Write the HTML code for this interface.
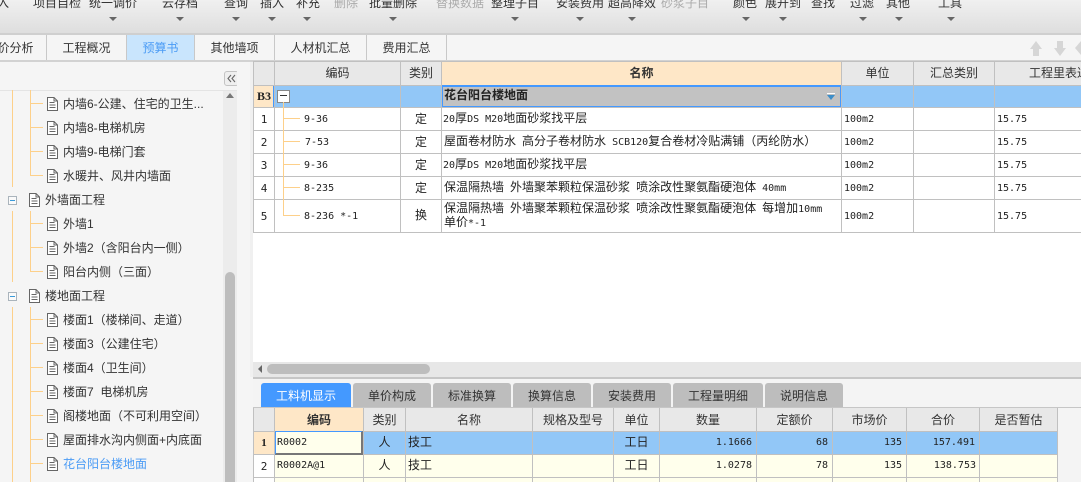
<!DOCTYPE html>
<html lang="zh">
<head>
<meta charset="utf-8">
<style>
html,body{margin:0;padding:0}
body{width:1081px;height:482px;overflow:hidden;position:relative;background:#fff;font-family:"WenQuanYi Zen Hei","Noto Sans CJK SC",sans-serif;font-size:12px;color:#222}
.a,.t,.b,.g,.h,.c,.n,.tree{position:absolute;white-space:nowrap}
.t{top:-4px;line-height:14px;font-family:"Liberation Sans","Noto Sans CJK SC",sans-serif;color:#333;font-size:12px}
.t.d{color:#aaa}
.ar{position:absolute;top:17px;width:0;height:0;border-left:4px solid transparent;border-right:4px solid transparent;border-top:4px solid #666}
.b{top:35px;height:25px;line-height:26px;text-align:center;font-family:"Liberation Sans","Noto Sans CJK SC",sans-serif;color:#333;border-right:1px solid #c8c8c8;box-sizing:border-box}
.tree{font-family:"Liberation Sans","Noto Sans CJK SC",sans-serif;line-height:16px;color:#333;font-size:12px}
.g{background:#c0c0c0}
.h{text-align:center;line-height:23px;height:23px;color:#333}
.c{line-height:23px;height:23px;color:#222}
.m{font-family:"DejaVu Sans Mono",monospace;font-size:10px}
.n{font-family:"DejaVu Sans Mono",monospace;font-size:10px;line-height:23px;height:23px;margin-top:1px;text-align:right;color:#222}
.bt{position:absolute;top:383px;height:24px;line-height:25px;text-align:center;background:#bdbdbd;color:#333;border-radius:3px 3px 0 0;font-size:12px}
</style>
</head>
<body>
<!-- toolbar -->
<div class="a" style="left:0;top:0;width:1081px;height:33px;background:linear-gradient(#f0f0f0,#dedede)"></div>
<div class="a" style="left:0;top:33px;width:1081px;height:2px;background:#cfcfcf"></div>
<span class="t" style="left:-3px">入</span>
<span class="t" style="left:33px">项目自检</span><span class="t" style="left:89px">统一调价</span>
<span class="t" style="left:162px">云存档</span><span class="t" style="left:224px">查询</span>
<span class="t" style="left:260px">插入</span><span class="t" style="left:296px">补充</span>
<span class="t d" style="left:334px">删除</span><span class="t" style="left:369px">批量删除</span>
<span class="t d" style="left:436px">替换数据</span><span class="t" style="left:491px">整理子目</span>
<span class="t" style="left:556px">安装费用</span><span class="t" style="left:608px">超高降效</span>
<span class="t d" style="left:661px">砂浆子目</span><span class="t" style="left:733px">颜色</span>
<span class="t" style="left:765px">展开到</span><span class="t" style="left:811px">查找</span>
<span class="t" style="left:850px">过滤</span><span class="t" style="left:886px">其他</span>
<span class="t" style="left:938px">工具</span>
<i class="ar" style="left:109px"></i><i class="ar" style="left:176px"></i><i class="ar" style="left:232px"></i><i class="ar" style="left:268px"></i><i class="ar" style="left:303px"></i><i class="ar" style="left:389px"></i><i class="ar" style="left:511px"></i><i class="ar" style="left:576px"></i><i class="ar" style="left:628px"></i><i class="ar" style="left:742px"></i><i class="ar" style="left:779px"></i><i class="ar" style="left:859px"></i><i class="ar" style="left:895px"></i><i class="ar" style="left:947px"></i>

<!-- tab bar -->
<div class="a" style="left:0;top:35px;width:1081px;height:25px;background:#f5f5f5"></div>
<div class="a" style="left:0;top:60px;width:1081px;height:2px;background:#d2d2d2"></div>
<div class="b" style="left:-15px;width:62px">价分析</div>
<div class="b" style="left:47px;width:80px">工程概况</div>
<div class="b" style="left:127px;width:68px;background:#c9e5fd;color:#4a9bf5">预算书</div>
<div class="b" style="left:195px;width:80px">其他墙项</div>
<div class="b" style="left:275px;width:92px">人材机汇总</div>
<div class="b" style="left:367px;width:80px">费用汇总</div>
<svg class="a" style="left:1025px;top:38px" width="56" height="20" viewBox="0 0 56 20"><path d="M11 3l6 8h-3v7H8v-7H5zM32 3h6v7h3l-6 8-6-8h3zM56 3v14l-6-7z" fill="#d6d6d6"/></svg>

<!-- left panel -->
<div class="a" style="left:0;top:62px;width:253px;height:420px;background:#f5f5f5"></div>
<div class="a" style="left:0;top:90px;width:249px;height:1px;background:#e4e4e4"></div>
<div class="a" style="left:224px;top:71px;width:13px;height:13px;border:1px solid #c4c4c4;border-radius:3px;background:#efefef"></div>
<svg class="a" style="left:224px;top:71px" width="15" height="15" viewBox="0 0 15 15"><path d="M7 4L4 7.500 7 11M11 4L8 7.500 11 11" fill="none" stroke="#666" stroke-width="1.100"/></svg>
<div class="a" style="left:223px;top:91px;width:14px;height:391px;background:#ececec"></div>
<div class="a" style="left:237px;top:62px;width:13px;height:420px;background:#f5f5f5"></div>
<div class="a" style="left:225px;top:272px;width:10px;height:210px;background:#bdbdbd;border-radius:5px 5px 0 0"></div>
<div class="a" style="left:226px;top:93px;width:0;height:0;border-left:4px solid transparent;border-right:4px solid transparent;border-bottom:5px solid #777"></div>

<svg class="a" style="left:0;top:90px" width="222" height="392" viewBox="0 90 222 392">
<defs><symbol id="doc" viewBox="0 0 11 14"><path d="M.5.500h6.500l3.500 3.500v9.500H.5zM7 .5v3.500h3.500M2.500 5.500h5M2.500 8h6M2.500 10.500h6" fill="#fff" stroke="#666" stroke-width="1"/></symbol></defs>
<path d="M12.500 90v97M12.500 211v71M12.500 307v175M30.500 90v86M30.500 211v61M30.500 307v175" stroke="#fdd08a" stroke-width="1" fill="none"/>
<path d="M31 103.500h12M31 127.500h12M31 151.500h12M31 175.500h12M31 223.500h12M31 247.500h12M31 271.500h12M31 319.500h12M31 343.500h12M31 367.500h12M31 391.500h12M31 415.500h12M31 439.500h12M31 463.500h12" stroke="#fdd08a" stroke-width="1" fill="none"/>
<use href="#doc" x="47" y="97" width="11" height="14"/><use href="#doc" x="47" y="121" width="11" height="14"/><use href="#doc" x="47" y="145" width="11" height="14"/><use href="#doc" x="47" y="169" width="11" height="14"/>
<use href="#doc" x="29" y="193" width="11" height="14"/>
<use href="#doc" x="47" y="217" width="11" height="14"/><use href="#doc" x="47" y="241" width="11" height="14"/><use href="#doc" x="47" y="265" width="11" height="14"/>
<use href="#doc" x="29" y="289" width="11" height="14"/>
<use href="#doc" x="47" y="313" width="11" height="14"/><use href="#doc" x="47" y="337" width="11" height="14"/><use href="#doc" x="47" y="361" width="11" height="14"/><use href="#doc" x="47" y="385" width="11" height="14"/><use href="#doc" x="47" y="409" width="11" height="14"/><use href="#doc" x="47" y="433" width="11" height="14"/><use href="#doc" x="47" y="457" width="11" height="14"/>
<rect x="8.500" y="196.500" width="8" height="8" fill="#fafafa" stroke="#aab4bc"/><path d="M10 200.500h5" stroke="#3a9ad9"/>
<rect x="8.500" y="292.500" width="8" height="8" fill="#fafafa" stroke="#aab4bc"/><path d="M10 296.500h5" stroke="#3a9ad9"/>
</svg>

<div class="tree" style="left:63px;top:96px">内墙6-公建、住宅的卫生...</div>
<div class="tree" style="left:63px;top:120px">内墙8-电梯机房</div>
<div class="tree" style="left:63px;top:144px">内墙9-电梯门套</div>
<div class="tree" style="left:63px;top:168px">水暖井、风井内墙面</div>
<div class="tree" style="left:45px;top:192px">外墙面工程</div>
<div class="tree" style="left:63px;top:216px">外墙1</div>
<div class="tree" style="left:63px;top:240px">外墙2（含阳台内一侧）</div>
<div class="tree" style="left:63px;top:264px">阳台内侧（三面）</div>
<div class="tree" style="left:45px;top:288px">楼地面工程</div>
<div class="tree" style="left:63px;top:312px">楼面1（楼梯间、走道）</div>
<div class="tree" style="left:63px;top:336px">楼面3（公建住宅）</div>
<div class="tree" style="left:63px;top:360px">楼面4（卫生间）</div>
<div class="tree" style="left:63px;top:384px">楼面7&nbsp; 电梯机房</div>
<div class="tree" style="left:63px;top:408px">阁楼地面（不可利用空间）</div>
<div class="tree" style="left:63px;top:432px">屋面排水沟内侧面+内底面</div>
<div class="tree" style="left:63px;top:456px;color:#4a9bf5">花台阳台楼地面</div>

<!-- top grid -->
<div class="a" style="left:250px;top:62px;width:3px;height:315px;background:#f0f0f0"></div>
<div class="a" style="left:253px;top:62px;width:828px;height:23px;background:#e8e8e8"></div>
<div class="a" style="left:442px;top:62px;width:399px;height:23px;background:#fee7c7"></div>
<div class="a" style="left:254px;top:85px;width:827px;height:22px;background:#92c7f7"></div>
<div class="a" style="left:254px;top:85px;width:20px;height:22px;background:#fee7c7"></div>
<div class="a" style="left:273px;top:85px;width:2px;height:22px;background:#4499ff"></div>
<div class="a" style="left:441px;top:85px;width:401px;height:23px;box-sizing:border-box;background:#c2c2c2;border:2px solid #4499ff"></div>
<svg class="a" style="left:826px;top:92px" width="10" height="9" viewBox="0 0 10 9"><path d="M1 1.500h8" stroke="#fff"/><path d="M1 3h8L5 8z" fill="#3d8ec9"/></svg>
<div class="a" style="left:277px;top:90px;width:11px;height:11px;border:1px solid #888;background:#fff"></div>
<div class="a" style="left:280px;top:95px;width:7px;height:1px;background:#333"></div>

<div class="g" style="left:253px;top:61px;width:828px;height:1px"></div>
<div class="g" style="left:253px;top:85px;width:188px;height:1px"></div>
<div class="g" style="left:842px;top:85px;width:239px;height:1px"></div>
<div class="g" style="left:253px;top:107px;width:828px;height:1px"></div>
<div class="g" style="left:253px;top:130px;width:828px;height:1px"></div>
<div class="g" style="left:253px;top:153px;width:828px;height:1px"></div>
<div class="g" style="left:253px;top:176px;width:828px;height:1px"></div>
<div class="g" style="left:253px;top:199px;width:828px;height:1px"></div>
<div class="g" style="left:253px;top:232px;width:828px;height:1px"></div>
<div class="g" style="left:253px;top:61px;width:1px;height:172px"></div>
<div class="g" style="left:274px;top:61px;width:1px;height:172px"></div>
<div class="g" style="left:400px;top:61px;width:1px;height:172px"></div>
<div class="g" style="left:441px;top:61px;width:1px;height:172px"></div>
<div class="g" style="left:841px;top:61px;width:1px;height:172px"></div>
<div class="g" style="left:913px;top:61px;width:1px;height:172px"></div>
<div class="g" style="left:994px;top:61px;width:1px;height:172px"></div>

<div class="h" style="left:275px;top:61px;width:125px">编码</div>
<div class="h" style="left:401px;top:61px;width:40px">类别</div>
<div class="h" style="left:442px;top:61px;width:399px;font-weight:bold">名称</div>
<div class="h" style="left:842px;top:61px;width:71px">单位</div>
<div class="h" style="left:914px;top:61px;width:80px">汇总类别</div>
<div class="h" style="left:1029px;top:61px;width:60px;text-align:left">工程里表达</div>

<div class="c" style="left:254px;top:85px;width:20px;text-align:center;font-family:'Liberation Serif',serif;font-weight:bold">B3</div>
<div class="c" style="left:444px;top:83px;font-weight:bold">花台阳台楼地面</div>

<svg class="a" style="left:283px;top:102px" width="30" height="120" viewBox="283 102 30 120"><path d="M283.500 102v114M284 118.500h16M284 141.500h16M284 164.500h16M284 187.500h16M284 215.500h16" stroke="#fdd08a" fill="none"/></svg>

<div class="n" style="left:254px;top:107px;width:20px;text-align:center;font-size:11px">1</div>
<div class="n" style="left:254px;top:130px;width:20px;text-align:center;font-size:11px">2</div>
<div class="n" style="left:254px;top:153px;width:20px;text-align:center;font-size:11px">3</div>
<div class="n" style="left:254px;top:176px;width:20px;text-align:center;font-size:11px">4</div>
<div class="n" style="left:254px;top:204px;width:20px;text-align:center;font-size:11px">5</div>
<div class="n" style="left:304px;top:107px">9-36</div>
<div class="n" style="left:305px;top:130px">7-53</div>
<div class="n" style="left:304px;top:153px">9-36</div>
<div class="n" style="left:304px;top:176px">8-235</div>
<div class="n" style="left:304px;top:204px">8-236 *-1</div>
<div class="h" style="left:401px;top:107px;width:40px;color:#222">定</div>
<div class="h" style="left:401px;top:130px;width:40px;color:#222">定</div>
<div class="h" style="left:401px;top:153px;width:40px;color:#222">定</div>
<div class="h" style="left:401px;top:176px;width:40px;color:#222">定</div>
<div class="h" style="left:401px;top:203px;width:40px;color:#222">换</div>
<div class="c" style="left:443px;top:106px"><span class="m">20</span>厚<span class="m">DS M20</span>地面砂浆找平层</div>
<div class="c" style="left:444px;top:129px">屋面卷材防水<span class="m"> </span>高分子卷材防水<span class="m"> SCB120</span>复合卷材冷贴满铺（丙纶防水）</div>
<div class="c" style="left:443px;top:152px"><span class="m">20</span>厚<span class="m">DS M20</span>地面砂浆找平层</div>
<div class="c" style="left:444px;top:175px">保温隔热墙<span class="m"> </span>外墙聚苯颗粒保温砂浆<span class="m"> </span>喷涂改性聚氨酯硬泡体<span class="m"> 40mm</span></div>
<div class="c" style="left:444px;top:196px">保温隔热墙<span class="m"> </span>外墙聚苯颗粒保温砂浆<span class="m"> </span>喷涂改性聚氨酯硬泡体<span class="m"> </span>每增加<span class="m">10mm</span></div>
<div class="c" style="left:444px;top:210px">单价<span class="m">*-1</span></div>
<div class="n" style="left:844px;top:107px">100m2</div><div class="n" style="left:844px;top:130px">100m2</div><div class="n" style="left:844px;top:153px">100m2</div><div class="n" style="left:844px;top:176px">100m2</div><div class="n" style="left:844px;top:204px">100m2</div>
<div class="n" style="left:997px;top:107px">15.75</div><div class="n" style="left:997px;top:130px">15.75</div><div class="n" style="left:997px;top:153px">15.75</div><div class="n" style="left:997px;top:176px">15.75</div><div class="n" style="left:997px;top:204px">15.75</div>

<!-- h scrollbar -->
<div class="a" style="left:253px;top:362px;width:828px;height:15px;background:#e7e7e7"></div>
<div class="a" style="left:267px;top:364px;width:163px;height:10px;border-radius:5px;background:#bdbdbd"></div>
<div class="a" style="left:258px;top:365px;width:0;height:0;border-top:4px solid transparent;border-bottom:4px solid transparent;border-right:4px solid #666"></div>
<div class="a" style="left:253px;top:377px;width:828px;height:2px;background:#c6c6c6"></div>

<!-- bottom tabs -->
<div class="a" style="left:253px;top:379px;width:828px;height:103px;background:#f4f4f4"></div>
<div class="bt" style="left:261px;width:90px;background:#4499ff;color:#fff">工料机显示</div>
<div class="bt" style="left:353px;width:78px">单价构成</div>
<div class="bt" style="left:433px;width:78px">标准换算</div>
<div class="bt" style="left:513px;width:78px">换算信息</div>
<div class="bt" style="left:593px;width:78px">安装费用</div>
<div class="bt" style="left:673px;width:90px">工程量明细</div>
<div class="bt" style="left:765px;width:78px">说明信息</div>
<div class="a" style="left:253px;top:407px;width:828px;height:1px;background:#c6c6c6"></div>

<!-- bottom grid -->
<div class="a" style="left:253px;top:408px;width:804px;height:23px;background:#e8e8e8"></div>
<div class="a" style="left:275px;top:408px;width:88px;height:23px;background:#fee7c7"></div>
<div class="a" style="left:253px;top:431px;width:804px;height:23px;background:#92c7f7"></div>
<div class="a" style="left:254px;top:431px;width:20px;height:23px;background:#fee7c7"></div>
<div class="a" style="left:275px;top:431px;width:782px;height:51px;background:#ffffec;clip-path:inset(23px 0 0 0)"></div>
<div class="a" style="left:253px;top:454px;width:21px;height:28px;background:#fff"></div>
<div class="g" style="left:253px;top:431px;width:804px;height:1px"></div>
<div class="g" style="left:253px;top:454px;width:804px;height:1px"></div>
<div class="g" style="left:253px;top:477px;width:804px;height:1px"></div>
<div class="g" style="left:253px;top:408px;width:1px;height:74px"></div>
<div class="g" style="left:274px;top:408px;width:1px;height:74px"></div>
<div class="g" style="left:363px;top:408px;width:1px;height:74px"></div>
<div class="g" style="left:405px;top:408px;width:1px;height:74px"></div>
<div class="g" style="left:532px;top:408px;width:1px;height:74px"></div>
<div class="g" style="left:613px;top:408px;width:1px;height:74px"></div>
<div class="g" style="left:659px;top:408px;width:1px;height:74px"></div>
<div class="g" style="left:756px;top:408px;width:1px;height:74px"></div>
<div class="g" style="left:832px;top:408px;width:1px;height:74px"></div>
<div class="g" style="left:906px;top:408px;width:1px;height:74px"></div>
<div class="g" style="left:979px;top:408px;width:1px;height:74px"></div>
<div class="g" style="left:1057px;top:408px;width:1px;height:74px"></div>
<div class="a" style="left:275px;top:431px;width:88px;height:24px;box-sizing:border-box;background:#ffffec;border-top:1px solid #4499ff;border-left:1px solid #4499ff;border-right:2px solid #777;border-bottom:2px solid #777"></div>

<div class="h" style="left:275px;top:408px;width:88px;font-weight:bold">编码</div>
<div class="h" style="left:364px;top:408px;width:41px">类别</div>
<div class="h" style="left:406px;top:408px;width:126px">名称</div>
<div class="h" style="left:533px;top:408px;width:80px">规格及型号</div>
<div class="h" style="left:614px;top:408px;width:45px">单位</div>
<div class="h" style="left:660px;top:408px;width:96px">数量</div>
<div class="h" style="left:757px;top:408px;width:75px">定额价</div>
<div class="h" style="left:833px;top:408px;width:73px">市场价</div>
<div class="h" style="left:907px;top:408px;width:72px">合价</div>
<div class="h" style="left:980px;top:408px;width:77px">是否暂估</div>

<div class="n" style="left:254px;top:431px;width:20px;text-align:center;font-family:'Liberation Serif',serif;font-weight:bold;font-size:11px">1</div>
<div class="n" style="left:254px;top:454px;width:20px;text-align:center;font-size:11px">2</div>
<div class="n" style="left:277px;top:430px">R0002</div>
<div class="n" style="left:277px;top:453px">R0002A@1</div>
<div class="h" style="left:364px;top:430px;width:41px;color:#222">人</div>
<div class="h" style="left:364px;top:453px;width:41px;color:#222">人</div>
<div class="c" style="left:408px;top:430px">技工</div>
<div class="c" style="left:408px;top:453px">技工</div>
<div class="h" style="left:614px;top:430px;width:45px;color:#222">工日</div>
<div class="h" style="left:614px;top:453px;width:45px;color:#222">工日</div>
<div class="n" style="left:660px;top:430px;width:92px">1.1666</div>
<div class="n" style="left:757px;top:430px;width:71px">68</div>
<div class="n" style="left:833px;top:430px;width:69px">135</div>
<div class="n" style="left:907px;top:430px;width:68px">157.491</div>
<div class="n" style="left:660px;top:453px;width:92px">1.0278</div>
<div class="n" style="left:757px;top:453px;width:71px">78</div>
<div class="n" style="left:833px;top:453px;width:69px">135</div>
<div class="n" style="left:907px;top:453px;width:69px">138.753</div>
</body>
</html>
